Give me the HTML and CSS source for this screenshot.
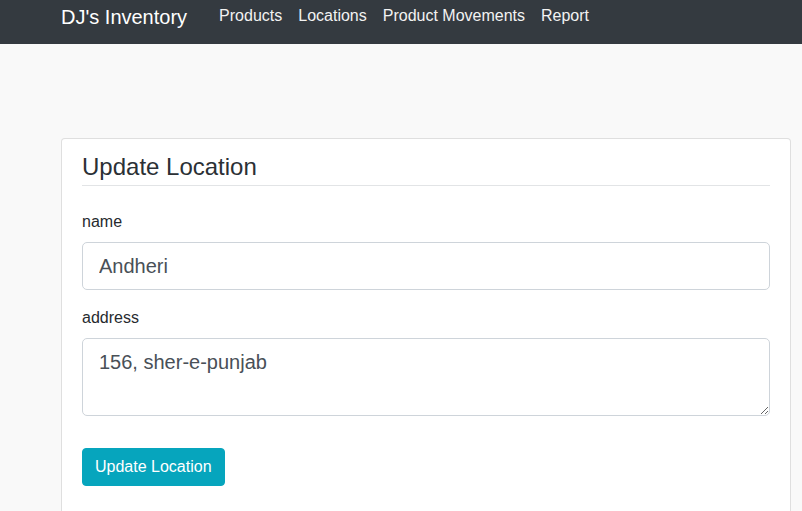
FILE: index.html
```html
<!DOCTYPE html>
<html>
<head>
<meta charset="utf-8">
<link rel="stylesheet" href="styles.css">
</head>
<body>
<nav class="navbar">
  <a class="brand" href="#">DJ's Inventory</a>
  <ul class="nav">
    <li><a href="#">Products</a></li>
    <li><a href="#">Locations</a></li>
    <li><a href="#">Product Movements</a></li>
    <li><a href="#">Report</a></li>
  </ul>
</nav>
<main class="main">
  <div class="card">
    <h2 class="title">Update Location</h2>
    <form class="form">
      <div class="group">
        <label class="label">name</label>
        <input class="control" type="text" value="Andheri">
      </div>
      <div class="group">
        <label class="label">address</label>
        <textarea class="control area" rows="2">156, sher-e-punjab</textarea>
      </div>
      <button class="btn" type="button">Update Location</button>
    </form>
  </div>
</main>
</body>
</html>
```

FILE: styles.css
```css
* { box-sizing: border-box; }
html, body { margin: 0; padding: 0; }
body {
  background: #f9f9f9;
  font-family: "Liberation Sans", Arial, sans-serif;
  font-size: 16px;
  line-height: 1.5;
  color: #212529;
}
.navbar {
  height: 44px;
  background: #343a40;
  display: flex;
  align-items: flex-start;
  padding: 0 0 0 61px;
}
.brand {
  color: #fff;
  text-decoration: none;
  font-size: 20px;
  line-height: 30px;
  margin-top: 2px;
  margin-right: 24px;
}
.nav {
  list-style: none;
  margin: 4px 0 0 0;
  padding: 0;
  display: flex;
}
.nav a {
  display: block;
  color: #f2f2f2;
  text-decoration: none;
  padding: 0 8px;
  line-height: 24px;
}
.main {
  padding: 94px 11px 0 61px;
}
.card {
  background: #fff;
  border: 1px solid rgba(0,0,0,.125);
  border-radius: 4px;
  padding: 13px 20px 30px;
}
.title {
  margin: 0;
  font-size: 24px;
  font-weight: 400;
  line-height: 29px;
  padding-bottom: 4px;
  color: #2b3035;
  border-bottom: 1px solid #e2e4e6;
}
.form { padding-top: 24px; }
.group { margin-bottom: 16px; }
.label {
  display: block;
  margin-bottom: 8px;
  line-height: 24px;
  color: #262a2e;
}
.control {
  display: block;
  width: 100%;
  height: 48px;
  padding: 8px 16px;
  font-family: inherit;
  font-size: 20px;
  line-height: 30px;
  color: #495057;
  background: #fff;
  border: 1px solid #ced4da;
  border-radius: 5px;
  outline: none;
}
.area {
  height: 78px;
  resize: vertical;
}
.btn {
  margin-top: 16px;
  height: 38px;
  padding: 6px 12px;
  font-family: inherit;
  font-size: 16px;
  line-height: 24px;
  color: #fff;
  background: #06a5bd;
  border: 1px solid #06a5bd;
  border-radius: 4px;
}
```
